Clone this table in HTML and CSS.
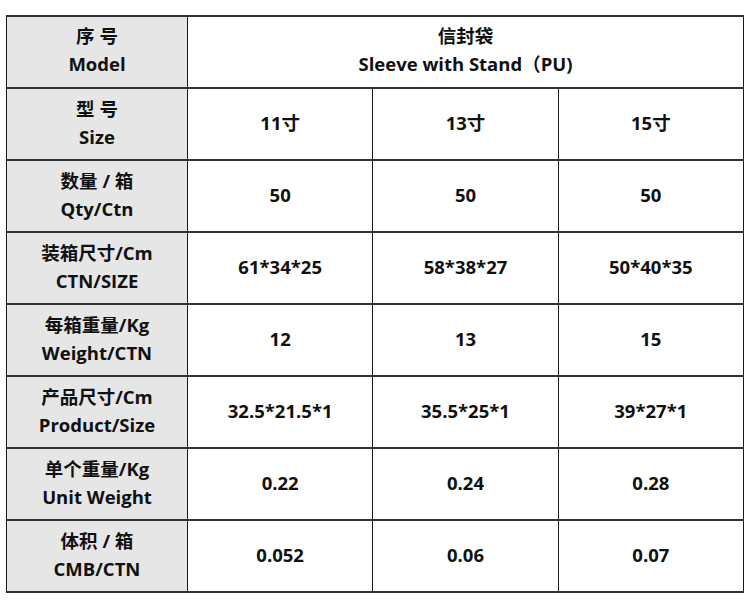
FILE: index.html
```html
<!DOCTYPE html>
<html lang="zh">
<head>
<meta charset="utf-8">
<link rel="stylesheet" href="styles.css">
</head>
<body>
<table class="spec">
  <colgroup>
    <col class="c-head">
    <col class="c-val">
    <col class="c-val">
    <col class="c-val">
  </colgroup>
  <tr class="first">
    <th>序 号<br>Model</th>
    <td colspan="3">信封袋<br>Sleeve with Stand（PU)</td>
  </tr>
  <tr>
    <th>型 号<br>Size</th>
    <td>11寸</td><td>13寸</td><td>15寸</td>
  </tr>
  <tr>
    <th>数量 / 箱<br>Qty/Ctn</th>
    <td>50</td><td>50</td><td>50</td>
  </tr>
  <tr>
    <th>装箱尺寸/Cm<br>CTN/SIZE</th>
    <td>61*34*25</td><td>58*38*27</td><td>50*40*35</td>
  </tr>
  <tr>
    <th>每箱重量/Kg<br>Weight/CTN</th>
    <td>12</td><td>13</td><td>15</td>
  </tr>
  <tr>
    <th>产品尺寸/Cm<br>Product/Size</th>
    <td>32.5*21.5*1</td><td>35.5*25*1</td><td>39*27*1</td>
  </tr>
  <tr>
    <th>单个重量/Kg<br>Unit Weight</th>
    <td>0.22</td><td>0.24</td><td>0.28</td>
  </tr>
  <tr>
    <th>体积 / 箱<br>CMB/CTN</th>
    <td>0.052</td><td>0.06</td><td>0.07</td>
  </tr>
</table>
</body>
</html>
```

FILE: styles.css
```css
html, body {
  margin: 0;
  padding: 0;
  background: #ffffff;
}
body {
  padding: 15px 0 0 6px;
  font-family: "Open Sans", "Noto Sans CJK SC", sans-serif;
  color: #111111;
}
.spec {
  border-collapse: collapse;
  table-layout: fixed;
  width: 738px;
}
.c-head { width: 181px; }
.spec th,
.spec td {
  height: 67px;
  padding: 0 0 3px;
  text-align: center;
  vertical-align: middle;
  font-size: 18.5px;
  font-weight: 700;
  line-height: 28px;
  border-left: 1px solid #1a1a1a;
  border-right: 1px solid #1a1a1a;
  border-top: 2px solid #333333;
  border-bottom: 2px solid #333333;
}
.spec .first th,
.spec .first td {
  height: 65px;
  padding-bottom: 5px;
}
.spec th {
  background: #e6e6e6;
}
```
